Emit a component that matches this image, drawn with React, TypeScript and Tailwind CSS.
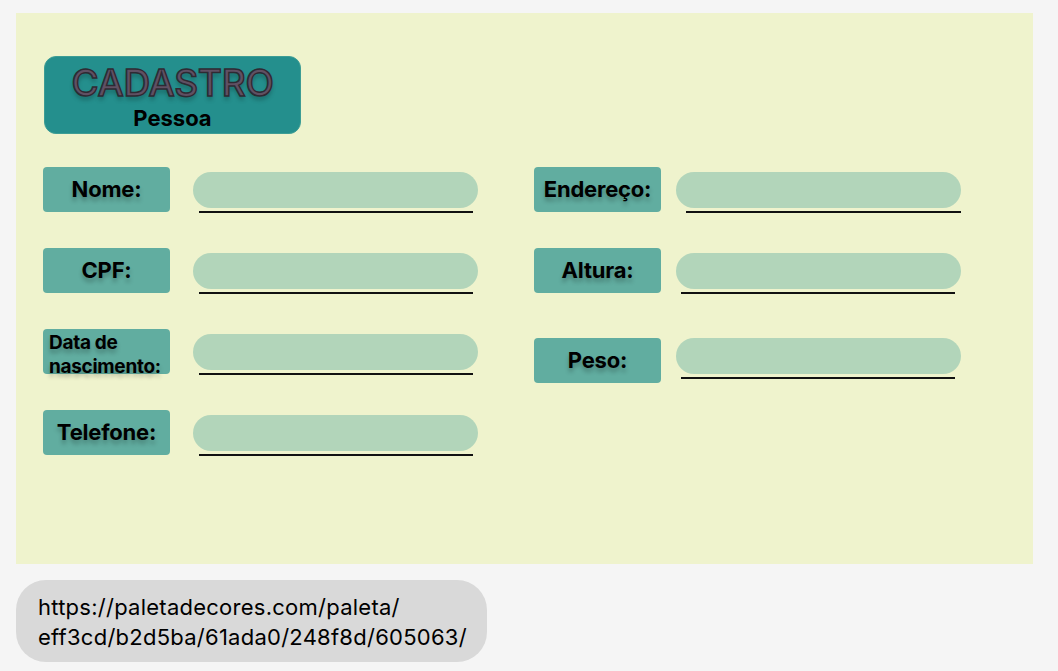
import React from 'react';

const labelText = '[text-shadow:0_4px_4px_rgba(0,0,0,0.25)]';

const Field: React.FC<{ label: string; lineClass?: string; small?: boolean; gapClass?: string; className?: string }> = ({
  label,
  lineClass = 'ml-[6px] w-[274px]',
  small,
  gapClass = 'gap-[23px]',
  className = '',
}) => (
  <div className={`flex items-start ${gapClass} ${className}`}>
    {small ? (
      <div className="w-[127px] h-[45px] rounded-[4px] bg-[#61ada0] shrink-0">
        <p className={`pl-[6px] pt-[2px] text-[19px] leading-[24px] font-bold text-black tracking-[-0.3px] ${labelText}`}>{label}</p>
      </div>
    ) : (
      <div
        className={`w-[127px] h-[45px] rounded-[4px] bg-[#61ada0] shrink-0 flex items-center justify-center text-[22px] font-bold text-black tracking-[-0.2px] ${labelText}`}
      >
        {label}
      </div>
    )}
    <div className="pt-[5px]">
      <input className="block w-[285px] h-[36px] rounded-full bg-[#b2d5ba] border-none outline-none px-4" />
      <div className={`mt-[3px] h-[2px] bg-[#111] ${lineClass}`} />
    </div>
  </div>
);

export default function App() {
  return (
    <div className="min-h-screen bg-[#f5f5f5] pt-[13px] pl-[16px] font-['Inter','Noto_Sans',sans-serif]">
      <div className="w-[1017px] h-[551px] bg-[#eff3cd] pt-[43px] pl-[27px]">
        <div className="w-[257px] h-[78px] ml-px rounded-[12px] bg-[#248f8d] border border-[#3d9d95] flex flex-col items-center pt-[4px]">
          <h1
            className="text-[37px] leading-[44px] font-medium text-[#605063] tracking-[-0.3px] [-webkit-text-stroke:1.5px_#2e2a33] [text-shadow:0_4px_4px_rgba(0,0,0,0.25)]"
          >
            CADASTRO
          </h1>
          <p className="text-[22px] leading-[24px] font-bold text-black mt-[1px]">Pessoa</p>
        </div>

        <div className="flex gap-[56px] mt-[33px]">
          <div className="flex flex-col gap-[35px]">
            <Field label="Nome:" />
            <Field label="CPF:" />
            <Field label="Data de nascimento:" small />
            <Field label="Telefone:" />
          </div>
          <div className="flex flex-col gap-[35px]">
            <Field label="Endereço:" gapClass="gap-[15px]" lineClass="ml-[10px] w-[275px]" />
            <Field label="Altura:" gapClass="gap-[15px]" lineClass="ml-[5px] w-[274px]" />
            <Field label="Peso:" gapClass="gap-[15px]" lineClass="ml-[5px] w-[274px]" className="mt-[9px] [&>div:last-child]:pt-0" />
          </div>
        </div>
      </div>

      <div className="mt-[16px] w-[471px] h-[82px] rounded-[30px] bg-[#d9d9d9] pl-[22px] pt-[12px] text-[22px] leading-[30px] tracking-[0.25px] text-black">
        <p>https://paletadecores.com/paleta/</p>
        <p>eff3cd/b2d5ba/61ada0/248f8d/605063/</p>
      </div>
    </div>
  );
}
